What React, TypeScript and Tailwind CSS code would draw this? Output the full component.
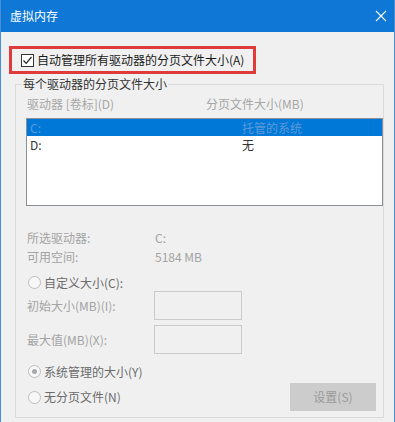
import React from "react";

const font = { fontFamily: '"Noto Sans CJK SC", "Noto Sans", sans-serif' };

function Radio({ checked, label }: { checked?: boolean; label: string }) {
    return (
        <div className="flex h-[17px] items-center">
            <span className="ml-[2px] flex h-[13px] w-[13px] items-center justify-center rounded-full border border-[#bdbdbd] bg-[#f7f7f7]">
                {checked && <span className="h-[5px] w-[5px] rounded-full bg-[#a9a9a9]" />}
            </span>
            <span className="ml-[3px] text-[12px] leading-[16px] text-[#6b6b6b]">{label}</span>
        </div>
    );
}

function SizeField({ label }: { label: string }) {
    return (
        <div className="flex h-[29px] items-center">
            <span className="w-[128px] pl-[1px] text-[12px] leading-[16px] text-[#a3a3a3]">{label}</span>
            <div className="h-[29px] w-[88px] border border-[#cacaca] bg-[#f0f0f0]" />
        </div>
    );
}

export default function App() {
    return (
        <div style={font} className="h-[422px] w-[395px] overflow-hidden border-x border-[#4a90d9] bg-[#f0f0f0]">
            {/* title bar */}
            <div className="flex h-[32px] items-center justify-between bg-[#0f78d6] pl-[9px] pr-[6px]">
                <span className="text-[12px] leading-[16px] text-white">虚拟内存</span>
                <svg width="12" height="12" viewBox="0 0 12 12" className="mr-[1px]">
                    <path d="M1 1 L11 11 M11 1 L1 11" stroke="#ffffff" strokeWidth="1.1" fill="none" />
                </svg>
            </div>

            {/* auto manage checkbox */}
            <div className="ml-[8px] mt-[14px] flex h-[28px] w-[247px] items-center border-[3px] border-[#e03b3b] pl-[9px]">
                <span className="flex h-[13px] w-[13px] items-center justify-center border border-[#333333] bg-white">
                    <svg width="11" height="11" viewBox="0 0 11 11">
                        <path d="M1.5 5.5 L4.2 8.3 L9.5 2" stroke="#222222" strokeWidth="1.2" fill="none" />
                    </svg>
                </span>
                <span className="ml-[3px] text-[12px] leading-[16px] text-[#1a1a1a]">自动管理所有驱动器的分页文件大小(A)</span>
            </div>

            {/* per-drive group */}
            <fieldset className="ml-[14px] mt-[2px] w-[368px] border border-[#dadada] pb-[6px] pl-[10px] pr-0 pt-0">
                <legend className="ml-[-4px] px-[1px] text-[12px] leading-[16px] text-[#333333]">每个驱动器的分页文件大小</legend>

                <div className="mt-[4px] flex h-[16px] items-center text-[12px] leading-[16px] text-[#a6a6a6]">
                    <span className="w-[180px] pl-[1px]">驱动器 [卷标](D)</span>
                    <span>分页文件大小(MB)</span>
                </div>

                <div className="mt-[6px] h-[88px] w-[357px] border border-[#8a8f96] bg-white">
                    <div className="flex h-[17px] items-center bg-[#0078d7] text-[12px] leading-[16px] text-[#5f98d9]">
                        <span className="w-[215px] pl-[3px]">C:</span>
                        <span>托管的系统</span>
                    </div>
                    <div className="flex h-[17px] items-center text-[12px] leading-[16px] text-[#333333]">
                        <span className="w-[215px] pl-[3px]">D:</span>
                        <span>无</span>
                    </div>
                </div>

                <div className="mt-[22px] text-[12px] leading-[16px] text-[#a3a3a3]">
                    <div className="flex h-[19px] items-center">
                        <span className="w-[129px] pl-[1px]">所选驱动器:</span>
                        <span>C:</span>
                    </div>
                    <div className="flex h-[19px] items-center">
                        <span className="w-[129px] pl-[1px]">可用空间:</span>
                        <span>5184 MB</span>
                    </div>
                </div>

                <div className="mt-[8px]">
                    <Radio label="自定义大小(C):" />
                </div>
                <SizeField label="初始大小(MB)(I):" />
                <div className="mt-[5px]">
                    <SizeField label="最大值(MB)(X):" />
                </div>

                <div className="mt-[9px]">
                    <Radio checked label="系统管理的大小(Y)" />
                </div>

                <div className="mt-[3px] flex h-[28px] items-center justify-between">
                    <Radio label="无分页文件(N)" />
                    <div className="mr-[7px] flex h-[28px] w-[86px] items-center justify-center bg-[#cccccc] text-[12px] leading-[16px] text-[#9a9a9a]">
                        设置(S)
                    </div>
                </div>
            </fieldset>
        </div>
    );
}
